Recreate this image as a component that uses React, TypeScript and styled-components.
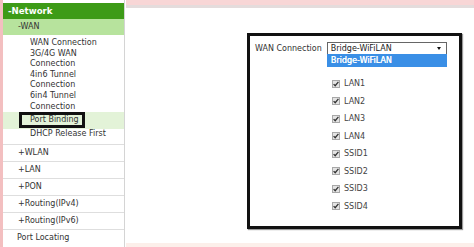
import React from "react";
import styled, { createGlobalStyle, css } from "styled-components";

const Global = createGlobalStyle`
  html, body { margin: 0; padding: 0; background: #ffffff; }
  body { font-family: "DejaVu Sans", Verdana, sans-serif; font-size: 8px; color: #333; }
`;

const Page = styled.div`
  display: flex;
  width: 474px;
  height: 247px;
  overflow: hidden;
  background: #fff;
`;

const LeftStrip = styled.div`
  width: 3px;
  flex: none;
  background: #f3bfc0;
`;

const Sidebar = styled.nav`
  width: 121px;
  flex: none;
  padding-top: 3px;
  border-right: 1px solid #d4d4d4;
  display: flex;
  flex-direction: column;
`;

const Header = styled.div`
  height: 16px;
  line-height: 16px;
  padding-left: 5px;
  background: #3d9b17;
  color: #fff;
  font-weight: bold;
  font-size: 8.6px;
`;

const Group = styled.div`
  height: 16px;
  line-height: 16px;
  padding-left: 15px;
  background: #b7e39d;
  color: #333;
`;

const SubList = styled.div`
  padding: 3px 0 4.7px;
  display: flex;
  flex-direction: column;
`;

const SubItem = styled.div<{ $active?: boolean }>`
  line-height: 10.6px;
  padding-left: 27px;
  color: #333;
  ${(p) =>
    p.$active &&
    css`
      background: #e3f3d8;
      padding-left: 16px;
      height: 16.5px;
      display: flex;
      align-items: center;
    `}
`;

const Marked = styled.span`
  display: inline-block;
  box-sizing: border-box;
  height: 16px;
  line-height: 10px;
  padding: 0 3px 0 8px;
  border: 3px solid #111;
`;

const MenuRow = styled.div<{ $indent?: boolean }>`
  box-sizing: border-box;
  height: 17px;
  line-height: 16px;
  border-top: 1px solid #dedede;
  padding-left: ${(p) => (p.$indent ? 15 : 14)}px;
  color: #333;
`;

const Main = styled.main`
  flex: 1;
  margin-left: 1px;
  display: flex;
  flex-direction: column;
`;

const TopBar = styled.div`
  height: 5px;
  background: #f8d6d6;
  border-bottom: 3px solid #e4dcdc;
  flex: none;
`;

const Content = styled.div`
  flex: 1;
  padding: 25px 0 0 121px;
`;

const Footer = styled.div`
  height: 4px;
  background: #fcefea;
  flex: none;
`;

const Frame = styled.section`
  box-sizing: border-box;
  width: 215px;
  height: 196px;
  border: 3px solid #111;
  box-shadow: 1px 1px 1px #999;
  padding: 6px 0 0 5px;
`;

const FieldRow = styled.div`
  display: flex;
  align-items: center;
  gap: 5px;
  height: 13px;
`;

const Label = styled.span`
  color: #333;
  line-height: 13px;
`;

const SelectBox = styled.div`
  position: relative;
  box-sizing: border-box;
  width: 120px;
  height: 13px;
  border: 1px solid #666;
  padding: 0 0 0 3px;
  display: flex;
  align-items: center;
  justify-content: space-between;
  color: #222;
`;

const Arrow = styled.span`
  width: 0;
  height: 0;
  margin-right: 5px;
  border-left: 2px solid transparent;
  border-right: 2px solid transparent;
  border-top: 3.5px solid #111;
`;

const Option = styled.div`
  position: absolute;
  top: 100%;
  left: -1px;
  box-sizing: border-box;
  width: 120px;
  height: 13px;
  line-height: 13px;
  padding-left: 4px;
  background: #3a8fe6;
  color: #fff;
  text-shadow: 0.3px 0 0 #fff;
`;

const CheckList = styled.ul`
  list-style: none;
  margin: 20px 0 0;
  padding: 0 0 0 77px;
`;

const CheckItem = styled.li`
  height: 17.5px;
  display: flex;
  align-items: center;
  gap: 4px;
  color: #444;
`;

const Box = styled.span`
  box-sizing: border-box;
  width: 8px;
  height: 8px;
  background: #e4e4e4;
  border: 1px solid #a8a8a8;
  display: flex;
  align-items: center;
  justify-content: center;
`;

const Check = () => (
  <svg width="8" height="8" viewBox="0 0 8 8" style={{ margin: "-1px" }}>
    <path d="M1.6 4.1 L3.2 5.7 L6.4 1.9" stroke="#333" strokeWidth="1.3" fill="none" />
  </svg>
);

const ports = ["LAN1", "LAN2", "LAN3", "LAN4", "SSID1", "SSID2", "SSID3", "SSID4"];

export default function App() {
  return (
    <>
      <Global />
      <Page>
        <LeftStrip />
        <Sidebar>
          <Header>-Network</Header>
          <Group>-WAN</Group>
          <SubList>
            <SubItem>WAN Connection</SubItem>
            <SubItem>
              3G/4G WAN
              <br />
              Connection
            </SubItem>
            <SubItem>
              4in6 Tunnel
              <br />
              Connection
            </SubItem>
            <SubItem>
              6in4 Tunnel
              <br />
              Connection
            </SubItem>
            <SubItem $active>
              <Marked>Port Binding</Marked>
            </SubItem>
            <SubItem>DHCP Release First</SubItem>
          </SubList>
          <MenuRow $indent>+WLAN</MenuRow>
          <MenuRow $indent>+LAN</MenuRow>
          <MenuRow $indent>+PON</MenuRow>
          <MenuRow $indent>+Routing(IPv4)</MenuRow>
          <MenuRow $indent>+Routing(IPv6)</MenuRow>
          <MenuRow>Port Locating</MenuRow>
        </Sidebar>
        <Main>
          <TopBar />
          <Content>
            <Frame>
              <FieldRow>
                <Label>WAN Connection</Label>
                <SelectBox>
                  <span>Bridge-WiFiLAN</span>
                  <Arrow />
                  <Option>Bridge-WiFiLAN</Option>
                </SelectBox>
              </FieldRow>
              <CheckList>
                {ports.map((p) => (
                  <CheckItem key={p}>
                    <Box>
                      <Check />
                    </Box>
                    {p}
                  </CheckItem>
                ))}
              </CheckList>
            </Frame>
          </Content>
          <Footer />
        </Main>
      </Page>
    </>
  );
}
